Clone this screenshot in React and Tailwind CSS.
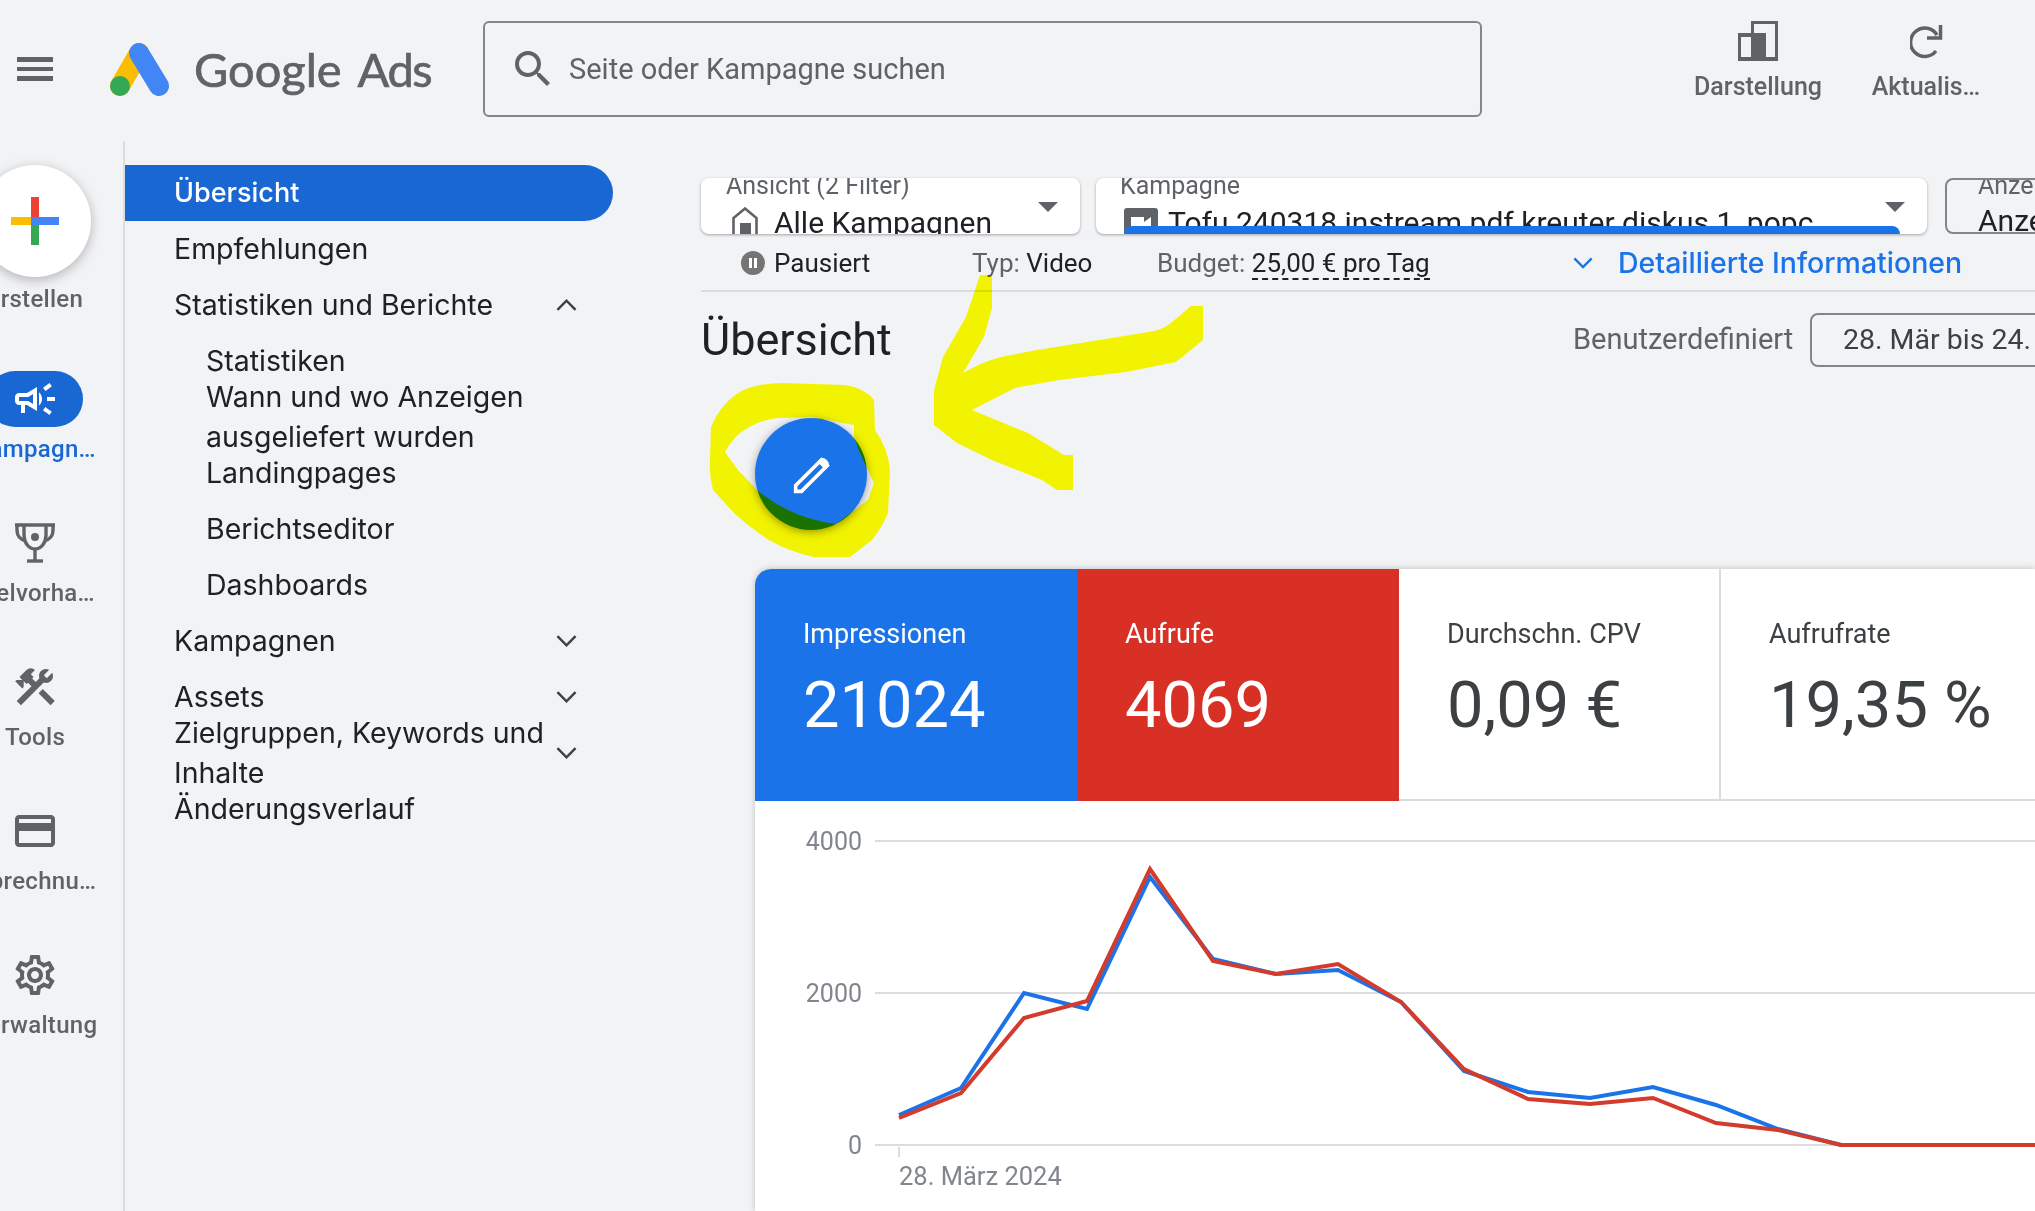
import React from 'react';
import {
  MdOutlineCampaign,
  MdConstruction,
  MdOutlineCreditCard,
  MdOutlineSettings,
  MdSearch,
} from 'react-icons/md';

const Chevron = ({ up, className }) => (
  <svg viewBox="0 0 22 14" className={className} fill="none" stroke="currentColor" strokeWidth="2.6">
    <polyline points={up ? '1.5,12 11,2.5 20.5,12' : '1.5,2 11,11.5 20.5,2'} />
  </svg>
);

const Triangle = () => (
  <svg viewBox="0 0 20 10" className="absolute top-[24px] right-[22px] w-5 h-[10px] text-[#5f6368]" fill="currentColor">
    <polygon points="0,0 20,0 10,10" />
  </svg>
);

const TrophyIcon = ({ className }) => (
  <svg viewBox="0 0 40 40" className={className} fill="none" stroke="currentColor" strokeWidth="3.4">
    <path d="M0 2H40" />
    <path d="M9 2V12C9 20 14 26 20 26C26 26 31 20 31 12V2" />
    <path d="M2 2V7C2 13 6 17 11 18" />
    <path d="M38 2V7C38 13 34 17 29 18" />
    <path d="M20 26V38" />
    <path d="M12 38H28" />
    <circle cx="20" cy="14" r="4" fill="currentColor" stroke="none" />
  </svg>
);

const navItems = [
  { label: 'Übersicht', rowClass: 'h-14 bg-[#1967d2] text-white text-[27px] font-medium rounded-r-[28px]' },
  { label: 'Empfehlungen', rowClass: 'h-14' },
  { label: 'Statistiken und Berichte', rowClass: 'h-14', chevron: 'up' },
  { label: 'Statistiken', rowClass: 'h-8 mt-3 pl-[81px]' },
  { label: ['Wann und wo Anzeigen', 'ausgeliefert wurden'], rowClass: 'h-20 pl-[81px]' },
  { label: 'Landingpages', rowClass: 'h-8 pl-[81px]' },
  { label: 'Berichtseditor', rowClass: 'h-14 mt-3 pl-[81px]' },
  { label: 'Dashboards', rowClass: 'h-14 pl-[81px]' },
  { label: 'Kampagnen', rowClass: 'h-14', chevron: 'down' },
  { label: 'Assets', rowClass: 'h-14', chevron: 'down' },
  { label: ['Zielgruppen, Keywords und', 'Inhalte'], rowClass: 'h-20 -mt-3', chevron: 'down' },
  { label: 'Änderungsverlauf', rowClass: 'h-8' },
];

const railItems = [
  { label: 'Zielvorha…', Icon: TrophyIcon, iconClass: 'w-10 h-10' },
  { label: 'Tools', Icon: MdConstruction, iconClass: 'w-12 h-12' },
  { label: 'Abrechnu…', Icon: MdOutlineCreditCard, iconClass: 'w-12 h-12' },
  { label: 'Verwaltung', Icon: MdOutlineSettings, iconClass: 'w-12 h-12' },
];

const stats = [
  { label: 'Impressionen', value: '21024', cellClass: 'w-[322px] bg-[#1a73e8] text-white' },
  { label: 'Aufrufe', value: '4069', cellClass: 'w-[322px] bg-[#d93025] text-white' },
  { label: 'Durchschn. CPV', value: '0,09 €', cellClass: 'w-[322px] border-r-2 border-b-2 border-[#dadce0] text-[#3c4043]' },
  { label: 'Aufrufrate', value: '19,35 %', cellClass: 'flex-1 border-b-2 border-[#dadce0] text-[#3c4043]' },
];

const blueLine = '899,1115 961,1088 1024,993 1087,1009 1150,877 1213,959 1276,974 1338,970 1401,1002 1464,1071 1528,1092 1590,1098 1653,1087 1716,1105 1778,1129 1841,1145 2035,1145';
const redLine = '899,1118 961,1093 1024,1018 1087,1001 1150,869 1213,961 1276,974 1338,964 1401,1002 1464,1069 1528,1099 1590,1104 1653,1098 1716,1123 1778,1130 1841,1145 2035,1145';

const App = () => {
  return (
    <div className="relative w-[2035px] h-[1211px] overflow-hidden bg-[#f2f3f5] font-[Roboto,sans-serif] text-[#202124]">
      {/* top bar */}
      <header className="flex items-center h-[141px] pb-[3px]">
        <div className="ml-[17px] w-9 flex flex-col gap-[5px]">
          <div className="h-[5px] bg-[#5f6368]" />
          <div className="h-[4px] bg-[#5f6368]" />
          <div className="h-[5px] bg-[#5f6368]" />
        </div>
        <div className="ml-[55px] w-[375px] flex items-center">
          <svg viewBox="108 40 62 55" className="w-[62px] h-[55px] shrink-0">
            <line x1="139" y1="51" x2="120" y2="84" stroke="#fbbc04" strokeWidth="20" strokeLinecap="round" />
            <line x1="139" y1="51" x2="159" y2="84" stroke="#4285f4" strokeWidth="20" strokeLinecap="round" />
            <circle cx="120" cy="84" r="10" fill="#34a853" />
          </svg>
          <span className="ml-[24px] text-[47px] text-[#5f6368] font-[Lato,sans-serif] whitespace-nowrap [-webkit-text-stroke:0.7px_#5f6368]">
            Google<span className="ml-4 tracking-[-1.5px]">Ads</span>
          </span>
        </div>
        <div className="w-[999px] h-24 flex items-center border-2 border-[#80868b] rounded-md">
          <MdSearch className="ml-[24px] w-12 h-12 text-[#5f6368]" />
          <span className="ml-[12px] pt-[2px] text-[29px] text-[#5f6368]">Seite oder Kampagne suchen</span>
        </div>
        <div className="ml-[212px] mb-4 w-[128px] flex flex-col items-center text-[#5f6368]">
          <svg viewBox="0 0 40 40" className="w-10 h-10" fill="currentColor" fillRule="evenodd">
            <path d="M0 12H13V0H40V40H0ZM3 16V36H13V16ZM16 3V12H28V36H37V3Z" />
          </svg>
          <span className="mt-[12px] text-[25px] leading-7 font-medium whitespace-nowrap">Darstellung</span>
        </div>
        <div className="ml-[50px] mb-4 w-[108px] flex flex-col items-center text-[#5f6368]">
          <svg viewBox="0 0 36 36" className="ml-1 mt-1 w-9 h-9" fill="none" stroke="currentColor" strokeWidth="3.5">
            <path d="M27 10A14.2 14.2 0 1 0 26 26" />
            <path d="M17 13H30.5V0" />
          </svg>
          <span className="mt-[12px] text-[25px] leading-7 font-medium whitespace-nowrap">Aktualis…</span>
        </div>
      </header>

      <div className="flex h-[1070px]">
        {/* icon rail, cut off by the window on the left */}
        <aside className="w-[125px] shrink-0 border-r-2 border-[#dadce0] overflow-hidden">
          <div className="w-[124px] -ml-[27px] pt-6 text-[24px] tracking-[0.3px] text-[#5f6368]">
            <div className="h-[206px] flex flex-col items-center">
              <div className="w-28 h-28 shrink-0 rounded-full bg-white shadow-[0_3px_12px_rgba(60,64,67,0.35)] flex items-center justify-center">
                <svg viewBox="0 0 48 48" className="w-12 h-12">
                  <rect x="20" y="0" width="8" height="24" fill="#ea4335" />
                  <rect x="20" y="24" width="8" height="24" fill="#34a853" />
                  <rect x="0" y="20" width="20" height="8" fill="#fbbc04" />
                  <rect x="20" y="20" width="28" height="8" fill="#4285f4" />
                </svg>
              </div>
              <span className="mt-[8px] leading-7 font-medium whitespace-nowrap">Erstellen</span>
            </div>
            <div className="h-[144px] flex flex-col items-center">
              <div className="w-24 h-14 shrink-0 rounded-[28px] bg-[#1967d2] flex items-center justify-center">
                <MdOutlineCampaign className="w-12 h-12 text-white" />
              </div>
              <span className="mt-2 leading-7 font-medium text-[#1967d2] whitespace-nowrap">Kampagn…</span>
            </div>
            {railItems.map(({ label, Icon, iconClass }) => (
              <div key={label} className="h-[144px] flex flex-col items-center">
                <div className="h-14 flex items-center justify-center">
                  <Icon className={iconClass} />
                </div>
                <span className="mt-2 leading-7 font-medium whitespace-nowrap">{label}</span>
              </div>
            ))}
          </div>
        </aside>

        {/* section nav */}
        <nav className="w-[488px] shrink-0 pt-6 text-[28.5px] font-[Inter,sans-serif]">
          {navItems.map((item, i) => (
            <div key={i} className={`flex items-center pl-[49px] ${item.rowClass}`}>
              <div className="leading-10 whitespace-nowrap">
                {Array.isArray(item.label) ? item.label.map(l => <div key={l}>{l}</div>) : item.label}
              </div>
              {item.chevron && (
                <Chevron up={item.chevron === 'up'} className="ml-auto mr-9 w-[21px] h-[14px] shrink-0 text-[#3c4043]" />
              )}
            </div>
          ))}
        </nav>

        <main className="ml-[88px] w-[1334px] shrink-0 pt-[37px]">
          {/* filter cards */}
          <div className="flex">
            <div className="relative w-[379px] h-14 shrink-0 overflow-hidden rounded-lg bg-white shadow-[0_1px_3px_rgba(60,64,67,0.45)]">
              <div className="pl-[25px] -mt-1.5 text-[25px] leading-7 text-[#5f6368]">Ansicht (2 Filter)</div>
              <div className="flex items-start mt-1.5 pl-[31px] text-[30px] leading-[34px] whitespace-nowrap">
                <svg viewBox="0 0 26 28" className="mt-[1px] w-[26px] h-7 shrink-0 text-[#5f6368]" fill="none" stroke="currentColor" strokeWidth="2.6">
                  <path d="M1.5 28V11L13 1.5L24.5 11V28" />
                  <rect x="8" y="16" width="11" height="12" fill="currentColor" stroke="none" />
                </svg>
                <span className="ml-4">Alle Kampagnen</span>
              </div>
              <Triangle />
            </div>
            <div className="relative ml-4 w-[831px] h-14 shrink-0 overflow-hidden rounded-lg bg-white shadow-[0_1px_3px_rgba(60,64,67,0.45)]">
              <div className="pl-6 -mt-1.5 text-[25px] leading-7 text-[#5f6368]">Kampagne</div>
              <div className="flex items-center mt-1.5 pl-7 text-[30px] leading-[34px] whitespace-nowrap">
                <svg viewBox="0 0 34 30" className="w-[34px] h-[30px] shrink-0">
                  <rect width="34" height="30" rx="3" fill="#5f6368" />
                  <rect x="7" y="9" width="13" height="14" fill="#fff" />
                  <polygon points="20,14 27,9 27,23 20,18" fill="#fff" />
                </svg>
                <span className="ml-[10px]">Tofu 240318 instream pdf kreuter diskus 1_popc</span>
              </div>
              <Triangle />
              <div className="absolute left-7 bottom-0 w-[776px] h-2 rounded-t-lg bg-[#1a73e8]" />
            </div>
            <div className="ml-[18px] w-[220px] h-14 shrink-0 overflow-hidden rounded-lg border-2 border-[#80868b]">
              <div className="pl-[31px] -mt-2 text-[25px] leading-7 text-[#5f6368]">Anzeigengruppe</div>
              <div className="pl-[31px] mt-1 text-[30px] leading-[34px] whitespace-nowrap">Anzeigengruppe</div>
            </div>
          </div>

          {/* campaign status row */}
          <div className="flex items-center h-[58px] pt-[2px] border-b-2 border-[#dadce0] text-[26px] whitespace-nowrap">
            <div className="w-[271px] pl-10 flex items-center">
              <svg viewBox="0 0 24 24" className="w-6 h-6 shrink-0">
                <circle cx="12" cy="12" r="12" fill="#757575" />
                <rect x="8" y="7" width="3" height="10" fill="#fff" />
                <rect x="13" y="7" width="3" height="10" fill="#fff" />
              </svg>
              <span className="ml-[9px]">Pausiert</span>
            </div>
            <div className="w-[185px]"><span className="text-[#5f6368]">Typ:</span> Video</div>
            <div className="w-[416px]">
              <span className="text-[#5f6368]">Budget:</span>{' '}
              <span className="border-b-2 border-dashed border-[#202124]">25,00 € pro Tag</span>
            </div>
            <Chevron className="w-5 h-[14px] text-[#1a73e8]" />
            <span className="ml-[25px] text-[28.5px] font-medium font-[Inter,sans-serif] text-[#1a73e8] leading-none">Detaillierte Informationen</span>
          </div>

          {/* heading */}
          <div className="flex items-center h-24">
            <h1 className="w-[872px] shrink-0 text-[45px]">Übersicht</h1>
            <span className="w-[237px] shrink-0 text-[29px] text-[#5f6368]">Benutzerdefiniert</span>
            <div className="w-[300px] h-[54px] shrink-0 flex items-center pl-[31px] border-2 border-[#80868b] rounded-lg text-[28.5px] text-[#3c4043] whitespace-nowrap">28. Mär bis 24.</div>
          </div>

          {/* edit button */}
          <div className="ml-[54px] mt-[30px] w-28 h-28 rounded-full bg-[#1a73e8] shadow-[0_2px_8px_rgba(60,64,67,0.5)] flex items-center justify-center">
            <svg viewBox="0 0 36 36" className="ml-[2px] mt-[1px] w-[38px] h-[38px]" fill="none" stroke="#fff" strokeWidth="3.4">
              <path d="M2.5 33.5V28L27 3.5L32.5 9L8 33.5Z" />
              <path d="M23 5.5L25.5 3Q28 1 31 3L33 5Q35 8 33 10.5L30.5 13Z" fill="#fff" stroke="none" />
            </svg>
          </div>

          {/* stat tiles and chart */}
          <div className="ml-[54px] mt-[39px] w-[1280px] rounded-tl-2xl overflow-hidden bg-white shadow-[0_0_6px_rgba(60,64,67,0.3)]">
            <div className="flex h-[232px]">
              {stats.map(s => (
                <div key={s.label} className={`pl-12 pt-[49px] ${s.cellClass}`}>
                  <div className="text-[27px] leading-8">{s.label}</div>
                  <div className="mt-[19px] text-[65px] leading-[72px] whitespace-nowrap">{s.value}</div>
                </div>
              ))}
            </div>
            <svg viewBox="755 801 1280 410" className="block w-[1280px] h-[410px]">
              <g stroke="#dcdcdc" strokeWidth="2">
                <line x1="875" y1="841" x2="2035" y2="841" />
                <line x1="875" y1="993" x2="2035" y2="993" />
                <line x1="875" y1="1145" x2="2035" y2="1145" />
                <line x1="899" y1="1147" x2="899" y2="1157" />
              </g>
              <g fill="#80868b" fontSize="25" textAnchor="end">
                <text x="862" y="850">4000</text>
                <text x="862" y="1002">2000</text>
                <text x="862" y="1154">0</text>
              </g>
              <text x="899" y="1185" fill="#80868b" fontSize="25.5">28. März 2024</text>
              <polyline points={blueLine} fill="none" stroke="#1a73e8" strokeWidth="4" />
              <polyline points={redLine} fill="none" stroke="#d33b2c" strokeWidth="4" />
            </svg>
          </div>
        </main>
      </div>

      {/* yellow highlighter scribble drawn over the screenshot */}
      <svg viewBox="0 0 2035 1211" className="absolute inset-0 w-[2035px] h-[1211px] pointer-events-none mix-blend-multiply" fill="#ffff00" fillRule="evenodd">
        <path d="M711 427Q720 405 738 393Q755 383 783 383L845 385Q865 388 874 400L875 430Q888 448 890 470L888 513Q882 528 872 540L850 557H814Q790 552 769 540Q750 528 734 513L713 490Q709 475 710 460Z
          M725 452Q730 442 740 433Q758 420 778 418L811 417L854 425L854 437Q858 450 865 464L874 483L868 500L836 524Q790 518 757 490Q746 478 738 470Z" />
        <path d="M980 275H992V308L984 337L963 373Q982 362 1001 357L1037 350L1149 332Q1162 330 1171 323L1191 306H1203V340L1176 362L1126 372L1059 380L1015 388L972 410L1028 433L1064 455H1073V490H1057L1042 480L992 460L957 443L934 425V390L943 357L966 317L975 290Z" />
      </svg>
    </div>
  );
};

export default App;
